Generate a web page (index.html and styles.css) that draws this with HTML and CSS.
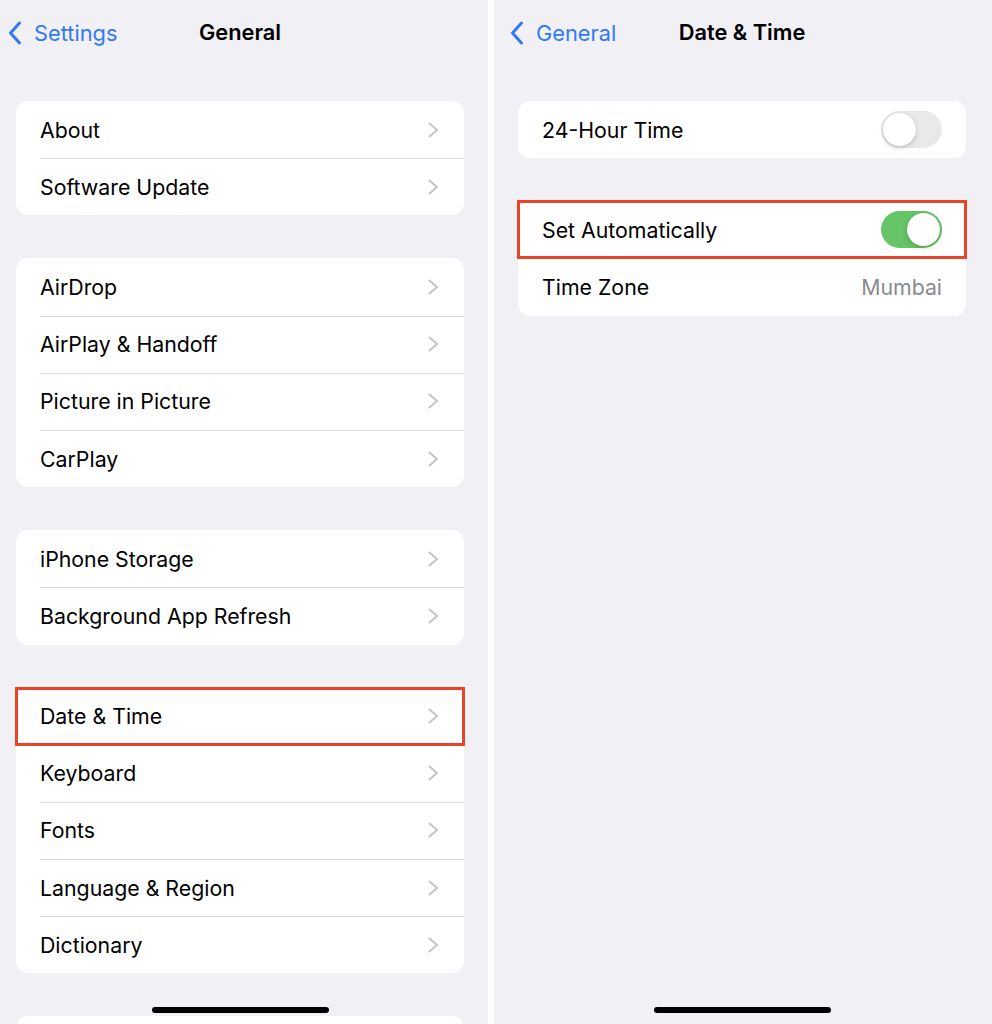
FILE: index.html
```html
<!DOCTYPE html>
<html lang="en">
<head>
    <meta charset="UTF-8">
    <meta name="viewport" content="width=device-width, initial-scale=1.0">
    <title>General - Date &amp; Time</title>
    <link rel="stylesheet" href="styles.css">
</head>
<body>
    <div class="screens">
        <!-- left screen: General -->
        <section class="screen left">
            <header class="nav">
                <a class="back">
                    <svg class="backIcon" viewBox="0 0 14 24" width="14" height="24"><path d="M11.5 2 L2.5 12 L11.5 22" fill="none" stroke="#3478f6" stroke-width="3" stroke-linecap="round" stroke-linejoin="round"/></svg>
                    <span>Settings</span>
                </a>
                <h1 class="title">General</h1>
            </header>

            <div class="group">
                <div class="row"><span class="label">About</span><svg class="chevron" viewBox="0 0 11 16"><path d="M1.5 1.5 L9 8 L1.5 14.5" /></svg></div>
                <div class="row"><span class="label">Software Update</span><svg class="chevron" viewBox="0 0 11 16"><path d="M1.5 1.5 L9 8 L1.5 14.5" /></svg></div>
            </div>

            <div class="group">
                <div class="row"><span class="label">AirDrop</span><svg class="chevron" viewBox="0 0 11 16"><path d="M1.5 1.5 L9 8 L1.5 14.5" /></svg></div>
                <div class="row"><span class="label">AirPlay &amp; Handoff</span><svg class="chevron" viewBox="0 0 11 16"><path d="M1.5 1.5 L9 8 L1.5 14.5" /></svg></div>
                <div class="row"><span class="label">Picture in Picture</span><svg class="chevron" viewBox="0 0 11 16"><path d="M1.5 1.5 L9 8 L1.5 14.5" /></svg></div>
                <div class="row"><span class="label">CarPlay</span><svg class="chevron" viewBox="0 0 11 16"><path d="M1.5 1.5 L9 8 L1.5 14.5" /></svg></div>
            </div>

            <div class="group">
                <div class="row"><span class="label">iPhone Storage</span><svg class="chevron" viewBox="0 0 11 16"><path d="M1.5 1.5 L9 8 L1.5 14.5" /></svg></div>
                <div class="row"><span class="label">Background App Refresh</span><svg class="chevron" viewBox="0 0 11 16"><path d="M1.5 1.5 L9 8 L1.5 14.5" /></svg></div>
            </div>

            <div class="group">
                <div class="row marked"><span class="label">Date &amp; Time</span><svg class="chevron" viewBox="0 0 11 16"><path d="M1.5 1.5 L9 8 L1.5 14.5" /></svg></div>
                <div class="row"><span class="label">Keyboard</span><svg class="chevron" viewBox="0 0 11 16"><path d="M1.5 1.5 L9 8 L1.5 14.5" /></svg></div>
                <div class="row"><span class="label">Fonts</span><svg class="chevron" viewBox="0 0 11 16"><path d="M1.5 1.5 L9 8 L1.5 14.5" /></svg></div>
                <div class="row"><span class="label">Language &amp; Region</span><svg class="chevron" viewBox="0 0 11 16"><path d="M1.5 1.5 L9 8 L1.5 14.5" /></svg></div>
                <div class="row"><span class="label">Dictionary</span><svg class="chevron" viewBox="0 0 11 16"><path d="M1.5 1.5 L9 8 L1.5 14.5" /></svg></div>
            </div>

            <div class="group">
                <div class="row"></div>
            </div>

            <div class="homeBar"></div>
        </section>

        <div class="divider"></div>

        <!-- right screen: Date & Time -->
        <section class="screen right">
            <header class="nav">
                <a class="back">
                    <svg class="backIcon" viewBox="0 0 14 24" width="14" height="24"><path d="M11.5 2 L2.5 12 L11.5 22" fill="none" stroke="#3478f6" stroke-width="3" stroke-linecap="round" stroke-linejoin="round"/></svg>
                    <span>General</span>
                </a>
                <h1 class="title">Date &amp; Time</h1>
            </header>

            <div class="group">
                <div class="row"><span class="label">24-Hour Time</span><span class="toggle"></span></div>
            </div>

            <div class="group">
                <div class="row marked"><span class="label">Set Automatically</span><span class="toggle on"></span></div>
                <div class="row"><span class="label">Time Zone</span><span class="value">Mumbai</span></div>
            </div>

            <div class="homeBar"></div>
        </section>
    </div>
</body>
</html>
```

FILE: styles.css
```css
body {
    margin: 0;
    background: white;
    font-family: Inter, "Liberation Sans", sans-serif;
    color: #000;
}
.screens {
    display: flex;
    height: 1024px;
    overflow: hidden;
}
.screen {
    position: relative;
    background: #f0f0f5;
    box-sizing: border-box;
}
.left {
    width: 488px;
    padding: 0 24px 0 16px;
}
.right {
    width: 498px;
    padding: 0 26px 0 24px;
}
.divider {
    width: 6px;
    background: white;
}
.nav {
    position: relative;
    height: 64px;
    display: flex;
    align-items: center;
    justify-content: center;
    margin-bottom: 37px;
}
.back {
    position: absolute;
    left: -8px;
    top: 20px;
    display: flex;
    align-items: center;
    gap: 12px;
    color: #3478f6;
    font-size: 21.8px;
}
.backIcon {
    display: block;
}
.title {
    margin: 0;
    font-size: 21.8px;
    font-weight: 600;
}
.group {
    background: white;
    border-radius: 12px;
    margin-bottom: 43px;
}
.row {
    position: relative;
    height: 57.2px;
    display: flex;
    align-items: center;
    justify-content: space-between;
    padding: 0 24px;
    font-size: 21.3px;
}
.row + .row::before {
    content: "";
    position: absolute;
    top: 0;
    left: 24px;
    right: 0;
    border-top: 1px solid #dcdce0;
}
.marked {
    outline: 3px solid #e8442a;
    outline-offset: -2px;
    z-index: 1;
}
.chevron {
    width: 11px;
    height: 16px;
    margin-right: 1px;
    fill: none;
    stroke: #c4c4c7;
    stroke-width: 2;
    stroke-linecap: round;
    stroke-linejoin: round;
}
.value {
    color: #8a8a8e;
}
.toggle {
    position: relative;
    width: 61px;
    height: 37px;
    border-radius: 19px;
    background: #e9e9ea;
}
.toggle::after {
    content: "";
    position: absolute;
    top: 2px;
    left: 2px;
    width: 33px;
    height: 33px;
    border-radius: 50%;
    background: white;
    box-shadow: 0 2px 5px rgba(0, 0, 0, 0.18), 0 0 1px rgba(0, 0, 0, 0.1);
}
.toggle.on {
    background: #65c466;
}
.toggle.on::after {
    left: 26px;
}
.homeBar {
    position: absolute;
    bottom: 11px;
    left: 50%;
    width: 177px;
    height: 6px;
    margin-left: -89px;
    border-radius: 3px;
    background: #000;
    z-index: 2;
}
.left .homeBar {
    margin-left: -92px;
}
```
